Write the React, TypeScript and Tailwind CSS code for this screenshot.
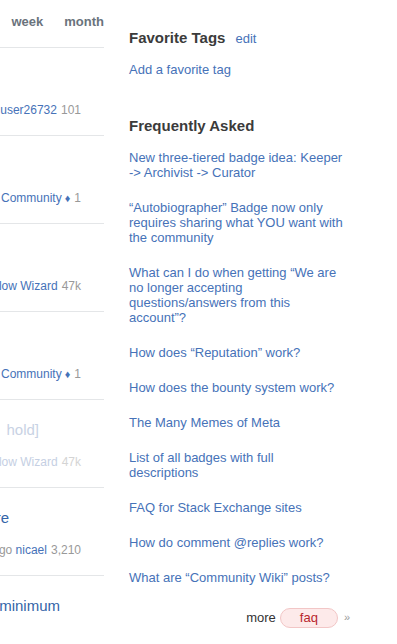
import type { FC } from 'react'

type Row = {
  title?: string
  user: string
  rep: string
  mod?: boolean
  faded?: boolean
}

const ROWS: Row[] = [
  { user: 'user26732', rep: '101' },
  { user: 'Community', rep: '1', mod: true },
  { user: 'low Wizard', rep: '47k' },
  { user: 'Community', rep: '1', mod: true },
  { title: 'hold]', user: 'low Wizard', rep: '47k', faded: true },
  { title: 're', user: 'nicael', rep: '3,210' },
  { title: 'minimum', user: '', rep: '' },
]

const TITLE_PAD: Record<string, string> = {
  'hold]': 'pr-[65px]',
  re: 'pr-[95px]',
  minimum: 'pr-[44px]',
}

const FAQ = [
  'New three-tiered badge idea: Keeper -> Archivist -> Curator',
  '\u201cAutobiographer\u201d Badge now only requires sharing what YOU want with the community',
  'What can I do when getting \u201cWe are no longer accepting questions/answers from this account\u201d?',
  'How does \u201cReputation\u201d work?',
  'How does the bounty system work?',
  'The Many Memes of Meta',
  'List of all badges with full descriptions',
  'FAQ for Stack Exchange sites',
  'How do comment @replies work?',
  'What are \u201cCommunity Wiki\u201d posts?',
]

const QuestionRow: FC<{ row: Row }> = ({ row }) => (
  <div className="h-[88px] border-b border-[#e4e6e8] pt-[20px] overflow-hidden">
    <div className={`h-[20px] flex justify-end whitespace-nowrap text-[15px] leading-[20px] ${row.title ? TITLE_PAD[row.title] : ''} ${row.faded ? 'text-[#c8d2e4]' : 'text-[#3465a8]'}`}>
      {row.title}
    </div>
    {row.user && (
      <div className="mt-[14px] h-[16px] flex justify-end items-baseline whitespace-nowrap pr-[23px] text-[12px] leading-[16px]">
        {row.title === 're' && <span className="text-[#999]">go&nbsp;</span>}
        <span className={row.faded ? 'text-[#c5cfe3]' : 'text-[#4672b8]'}>{row.user}</span>
        {row.mod && <span className="text-[#4672b8] text-[11px] ml-[3px]">{'\u2666'}</span>}
        <span className={`ml-[4px] ${row.faded ? 'text-[#d4d4d4]' : 'text-[#999]'}`}>{row.rep}</span>
      </div>
    )}
  </div>
)

export default function App() {
  return (
    <div className="w-[397px] h-[644px] overflow-hidden bg-white flex" style={{ fontFamily: '"Liberation Sans", Arial, sans-serif' }}>
      <div className="w-[104px] shrink-0 overflow-hidden">
        <div className="h-[48px] border-b border-[#e4e6e8] flex items-center justify-end gap-[21px] text-[13px] font-bold text-[#6a737c] pb-[3px]">
          <span>week</span>
          <span>month</span>
        </div>
        {ROWS.map((row, i) => (
          <QuestionRow key={i} row={row} />
        ))}
      </div>

      <div className="ml-[25px] w-[216px] shrink-0 pt-[28px]">
        <div className="flex items-baseline">
          <h2 className="text-[15px] leading-[20px] font-bold text-[#3b3b3b]">Favorite Tags</h2>
          <a className="ml-[10px] text-[13px] text-[#4672b8]">edit</a>
        </div>
        <div className="mt-[13px] text-[13px] leading-[15px] text-[#4672b8]">Add a favorite tag</div>

        <h2 className="mt-[39px] text-[15px] leading-[20px] font-bold text-[#3b3b3b]">Frequently Asked</h2>
        <ul className="mt-[14px] flex flex-col gap-[20px]">
          {FAQ.map((q) => (
            <li key={q} className="text-[13px] leading-[15px] text-[#4672b8]">
              {q}
            </li>
          ))}
        </ul>

        <div className="mt-[23px] -mr-[5px] flex items-center justify-end text-[13px]">
          <span className="text-[#333] mr-[4px]">more</span>
          <span className="h-[20px] px-[19px] leading-[18px] rounded-full border border-[#f2c6c6] bg-[#fdeaea] text-[#b8262d]">faq</span>
          <span className="ml-[6px] text-[#999] text-[11px]">{'\u00bb'}</span>
        </div>
      </div>
    </div>
  )
}
